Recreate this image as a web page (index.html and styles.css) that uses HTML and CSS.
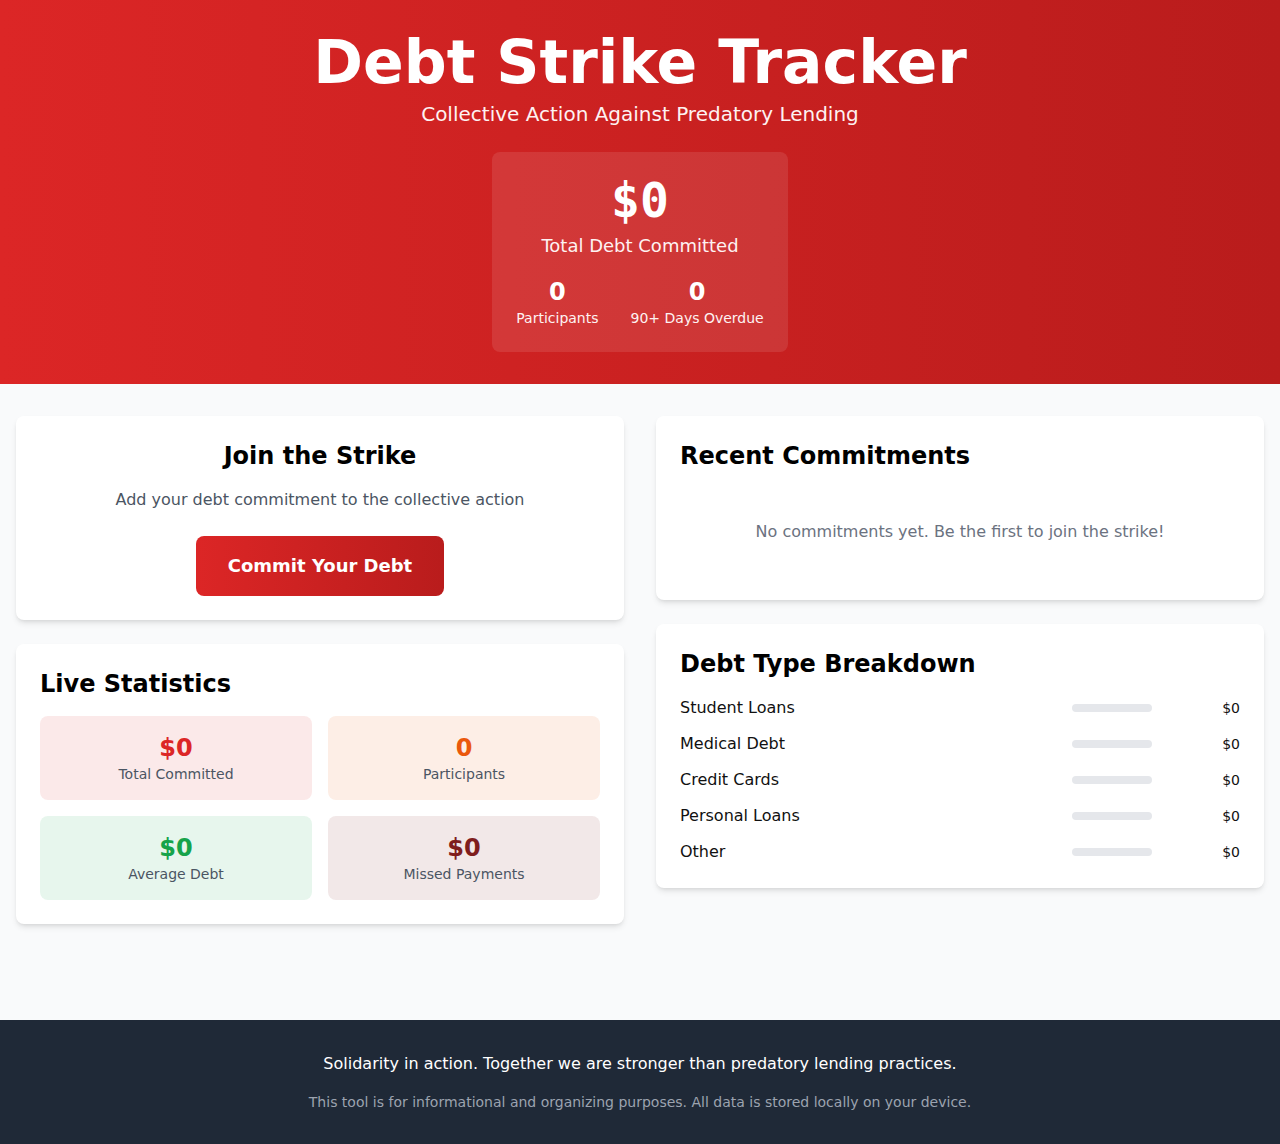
FILE: index.html
```html
<!DOCTYPE html>
<html lang="en">
<head>
<meta charset="utf-8">
<title>Debt Strike Tracker</title>
<link rel="stylesheet" href="styles.css">
</head>
<body>
<header class="hero">
  <h1 class="hero-title">Debt Strike Tracker</h1>
  <p class="hero-sub">Collective Action Against Predatory Lending</p>
  <div class="hero-card">
    <div class="hero-total">$0</div>
    <div class="hero-total-label">Total Debt Committed</div>
    <div class="hero-stats">
      <div class="hero-stat">
        <div class="hero-stat-num">0</div>
        <div class="hero-stat-label">Participants</div>
      </div>
      <div class="hero-stat">
        <div class="hero-stat-num">0</div>
        <div class="hero-stat-label">90+ Days Overdue</div>
      </div>
    </div>
  </div>
</header>

<main class="main">
  <div class="column">
    <section class="card card-center">
      <h2 class="card-title">Join the Strike</h2>
      <p class="card-desc">Add your debt commitment to the collective action</p>
      <button class="btn-commit">Commit Your Debt</button>
    </section>
    <section class="card">
      <h2 class="card-title">Live Statistics</h2>
      <div class="stat-grid">
        <div class="stat stat-red"><div class="stat-val">$0</div><div class="stat-label">Total Committed</div></div>
        <div class="stat stat-orange"><div class="stat-val">0</div><div class="stat-label">Participants</div></div>
        <div class="stat stat-green"><div class="stat-val">$0</div><div class="stat-label">Average Debt</div></div>
        <div class="stat stat-dark"><div class="stat-val">$0</div><div class="stat-label">Missed Payments</div></div>
      </div>
    </section>
  </div>
  <div class="column">
    <section class="card">
      <h2 class="card-title">Recent Commitments</h2>
      <p class="empty">No commitments yet. Be the first to join the strike!</p>
    </section>
    <section class="card">
      <h2 class="card-title">Debt Type Breakdown</h2>
      <ul class="breakdown">
        <li class="bd-row"><span class="bd-label">Student Loans</span><span class="bd-right"><span class="bd-bar"><span class="bd-fill" style="width:0%"></span></span><span class="bd-amt">$0</span></span></li>
        <li class="bd-row"><span class="bd-label">Medical Debt</span><span class="bd-right"><span class="bd-bar"><span class="bd-fill" style="width:0%"></span></span><span class="bd-amt">$0</span></span></li>
        <li class="bd-row"><span class="bd-label">Credit Cards</span><span class="bd-right"><span class="bd-bar"><span class="bd-fill" style="width:0%"></span></span><span class="bd-amt">$0</span></span></li>
        <li class="bd-row"><span class="bd-label">Personal Loans</span><span class="bd-right"><span class="bd-bar"><span class="bd-fill" style="width:0%"></span></span><span class="bd-amt">$0</span></span></li>
        <li class="bd-row"><span class="bd-label">Other</span><span class="bd-right"><span class="bd-bar"><span class="bd-fill" style="width:0%"></span></span><span class="bd-amt">$0</span></span></li>
      </ul>
    </section>
  </div>
</main>

<footer class="footer">
  <p class="footer-main">Solidarity in action. Together we are stronger than predatory lending practices.</p>
  <p class="footer-note">This tool is for informational and organizing purposes. All data is stored locally on your device.</p>
</footer>
</body>
</html>
```

FILE: styles.css
```css
* { box-sizing: border-box; }
html, body { margin: 0; padding: 0; }
body {
  font-family: "DejaVu Sans", "Liberation Sans", sans-serif;
  background: #f9fafb;
  color: #111827;
  font-size: 16px;
  line-height: 24px;
}
p, h1, h2, ul { margin: 0; padding: 0; }

.hero {
  background: linear-gradient(90deg, #dc2626 0%, #b91c1c 100%);
  color: #fff;
  text-align: center;
  padding: 32px 16px;
}
.hero-title {
  font-size: 60px;
  line-height: 60px;
  font-weight: 700;
  margin-bottom: 8px;
}
.hero-sub {
  font-size: 20px;
  line-height: 28px;
  color: #fef2f2;
}
.hero-card {
  display: inline-block;
  margin-top: 24px;
  background: rgba(255,255,255,0.1);
  border-radius: 8px;
  padding: 24px;
}
.hero-total {
  font-family: "DejaVu Sans Mono", "Liberation Mono", monospace;
  font-weight: 700;
  font-size: 48px;
  line-height: 48px;
}
.hero-total-label {
  margin-top: 8px;
  font-size: 18px;
  line-height: 28px;
  color: #fef2f2;
}
.hero-stats {
  margin-top: 16px;
  display: flex;
  justify-content: center;
  gap: 32px;
}
.hero-stat-num {
  font-size: 24px;
  line-height: 32px;
  font-weight: 700;
}
.hero-stat-label {
  font-size: 14px;
  line-height: 20px;
  color: #fef2f2;
}

.main {
  display: grid;
  grid-template-columns: 1fr 1fr;
  gap: 32px;
  padding: 32px 16px;
  align-items: start;
}
.column {
  display: flex;
  flex-direction: column;
  gap: 24px;
}
.card {
  background: #fff;
  border-radius: 8px;
  padding: 24px;
  box-shadow: 0 4px 6px -1px rgba(0,0,0,0.1), 0 2px 4px -2px rgba(0,0,0,0.1);
}
.card-center { text-align: center; }
.card-title {
  font-size: 24px;
  line-height: 32px;
  font-weight: 700;
  color: #000;
  margin-bottom: 16px;
}
.card-desc {
  color: #4b5563;
  margin-bottom: 24px;
}
.btn-commit {
  font-family: inherit;
  font-size: 18px;
  line-height: 28px;
  font-weight: 700;
  color: #fff;
  border: 0;
  border-radius: 8px;
  padding: 16px 32px;
  background: linear-gradient(90deg, #dc2626 0%, #b91c1c 100%);
  cursor: pointer;
}

.stat-grid {
  display: grid;
  grid-template-columns: 1fr 1fr;
  gap: 16px;
}
.stat {
  border-radius: 8px;
  padding: 16px;
  text-align: center;
}
.stat-val {
  font-size: 24px;
  line-height: 32px;
  font-weight: 700;
}
.stat-label {
  font-size: 14px;
  line-height: 20px;
  color: #4b5563;
}
.stat-red { background: rgba(220,38,38,0.1); }
.stat-red .stat-val { color: #dc2626; }
.stat-orange { background: rgba(234,88,12,0.1); }
.stat-orange .stat-val { color: #ea580c; }
.stat-green { background: rgba(22,163,74,0.1); }
.stat-green .stat-val { color: #16a34a; }
.stat-dark { background: rgba(127,29,29,0.1); }
.stat-dark .stat-val { color: #7f1d1d; }

.empty {
  text-align: center;
  color: #6b7280;
  padding: 32px 0;
}

.breakdown {
  list-style: none;
  display: flex;
  flex-direction: column;
  gap: 12px;
}
.bd-row {
  display: flex;
  justify-content: space-between;
  align-items: center;
}
.bd-label { color: #111; }
.bd-right {
  display: flex;
  align-items: center;
  gap: 8px;
}
.bd-bar {
  display: block;
  width: 80px;
  height: 8px;
  border-radius: 9999px;
  background: #e5e7eb;
  overflow: hidden;
}
.bd-fill {
  display: block;
  height: 100%;
  background: #dc2626;
}
.bd-amt {
  width: 80px;
  text-align: right;
  font-size: 14px;
  line-height: 20px;
  color: #111;
}

.footer {
  margin-top: 64px;
  background: #1f2937;
  color: #f3f4f6;
  text-align: center;
  padding: 32px 16px;
}
.footer-main { color: #fff; }
.footer-note {
  margin-top: 16px;
  font-size: 14px;
  line-height: 20px;
  color: #9ca3af;
}
```
